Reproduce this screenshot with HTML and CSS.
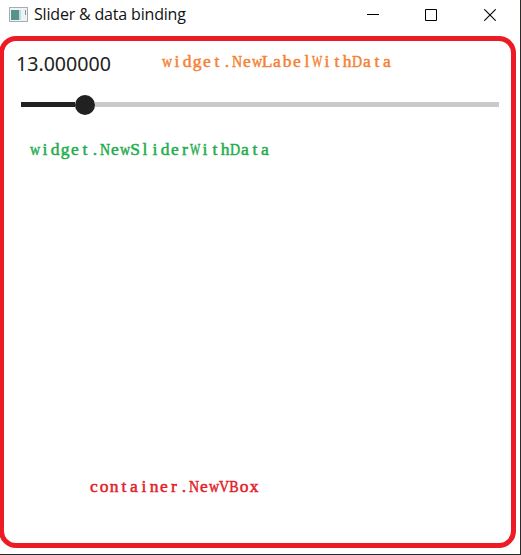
FILE: index.html
```html
<!DOCTYPE html>
<html lang="en">
<head>
<meta charset="utf-8">
<title>Slider &amp; data binding</title>
<link rel="stylesheet" href="styles.css">
</head>
<body>
<main class="window">
<header class="titlebar">
<svg class="app-icon" width="20" height="16" viewBox="0 0 20 16"><rect x=".5" y=".5" width="18" height="14" fill="#edf3f6" stroke="#a6adb2"/><rect x="2" y="3" width="8" height="10" fill="#569487"/><path d="M10 3h2v10h-2z" fill="#c1d9df"/><path d="M16.5 3v5" stroke="#839498"/></svg>
<h1 class="title">Slider &amp; data binding</h1>
<div class="controls">
<svg width="12" height="12" viewBox="0 0 12 12"><path d="M0 5.5h12"/></svg>
<svg width="12" height="12" viewBox="0 0 12 12"><path d="M.5.5h11v11H.5z"/></svg>
<svg width="12" height="12" viewBox="0 0 12 12"><path d="M.3.3l11.4 11.4M11.7.3L.3 11.7"/></svg>
</div>
</header>
<section class="content">
<div class="label-row"><span class="value">13.000000</span><span class="note orange"><i class="mid">w</i><i>i</i><i>d</i><i>g</i><i>e</i><i>t</i><i>.</i><i class="mid">N</i><i>e</i><i class="mid">w</i><i>L</i><i>a</i><i>b</i><i>e</i><i>l</i><i class="wide">W</i><i>i</i><i>t</i><i>h</i><i class="mid">D</i><i>a</i><i>t</i><i>a</i></span></div>
<div class="slider"><div class="fill"></div><div class="thumb"></div><div class="track"></div></div>
<span class="note green"><i class="mid">w</i><i>i</i><i>d</i><i>g</i><i>e</i><i>t</i><i>.</i><i class="mid">N</i><i>e</i><i class="mid">w</i><i>S</i><i>l</i><i>i</i><i>d</i><i>e</i><i>r</i><i class="wide">W</i><i>i</i><i>t</i><i>h</i><i class="mid">D</i><i>a</i><i>t</i><i>a</i></span>
<span class="note red"><i>c</i><i>o</i><i>n</i><i>t</i><i>a</i><i>i</i><i>n</i><i>e</i><i>r</i><i>.</i><i class="mid">N</i><i>e</i><i class="mid">w</i><i class="mid">V</i><i class="mid">B</i><i>o</i><i>x</i></span>
</section>
</main>
</body>
</html>
```
FILE: styles.css
```css
* { box-sizing: border-box; }
body { margin: 0; background: #fff; overflow: hidden; }
.window {
  width: 521px;
  height: 555px;
  border-right: 1px solid #2b2b29;
  border-bottom: 1px solid #2b2b29;
  display: flex;
  flex-direction: column;
}
.titlebar {
  height: 36px;
  display: flex;
  align-items: flex-start;
  padding: 7px 24px 0 9px;
}
.title {
  margin: -5px 0 0 5px;
  font: 400 16px/24px "Open Sans", "Noto Sans", sans-serif;
  color: #111;
  letter-spacing: -0.18px;
  white-space: nowrap;
}
.controls { margin: 2px 0 0 auto; display: flex; gap: 46px; }
.controls svg { fill: none; stroke: #000; stroke-width: 1; }
.controls svg:last-child { stroke-width: 1.1; margin-left: 1px; }
.content {
  width: 517px;
  height: 512px;
  margin-left: -1px;
  border: 5px solid #ed1c24;
  border-radius: 17px;
  padding: 10px 12px;
  display: flex;
  flex-direction: column;
  align-items: flex-start;
}
.label-row { display: flex; height: 26px; }
.value {
  width: 146px;
  font: 400 19.6px/26px "Noto Sans", sans-serif;
  color: #212121;
}
.slider {
  width: 478px;
  height: 20px;
  margin: 18px 0 0 5px;
  display: flex;
  align-items: center;
}
.fill, .track { height: 5px; margin-bottom: 1px; }
.fill { width: 54px; background: #212121; }
.thumb { width: 20px; height: 20px; border-radius: 50%; background: #212121; }
.track { flex: 1; background: #cacaca; }
.note {
  display: flex;
  height: 20px;
  font: 400 17.5px/20px "Liberation Serif", serif;
  -webkit-text-stroke: 0.5px currentColor;
}
.note i {
  width: 10px;
  font-style: normal;
  display: flex;
  justify-content: center;
}
.note .mid { transform: scaleX(0.8); }
.note .wide { transform: scaleX(0.62); }
.orange { color: #f58235; }
.green { color: #22ad4d; margin: 24px 0 0 14px; }
.red { color: #e32028; margin: 317px 0 0 73px; }
```
